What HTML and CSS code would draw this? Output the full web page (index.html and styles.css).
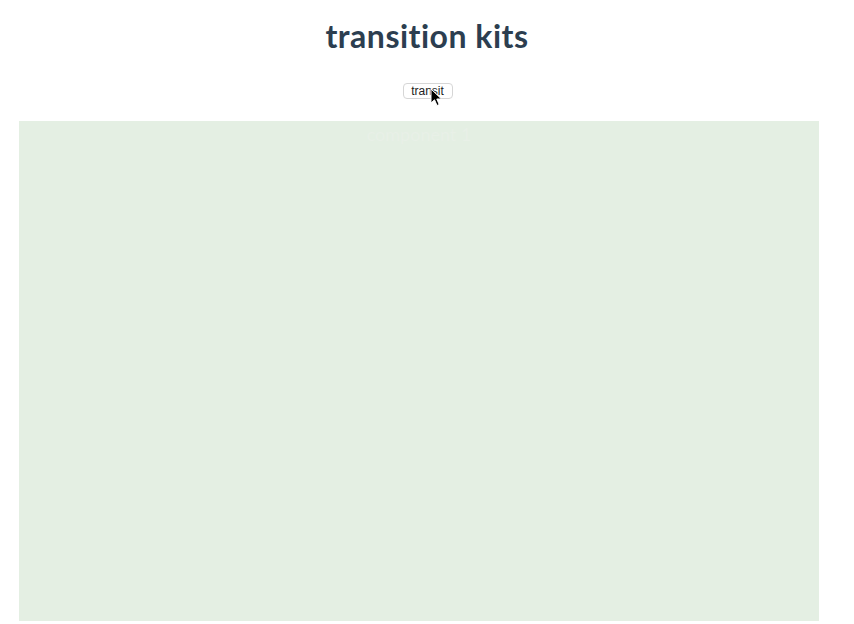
FILE: index.html
```html
<!DOCTYPE html>
<html>
<head>
<meta charset="utf-8">
<link rel="stylesheet" href="styles.css">
</head>
<body>
<div class="app">
  <h1 class="title">transition kits</h1>
  <div class="controls">
    <button class="btn">transit</button>
    <svg class="cursor" width="14" height="20" viewBox="0 0 14 20"><path d="M1 1 L1 15 L4.5 11.8 L7 17.5 L9.2 16.5 L6.8 11 L11.5 11 Z" fill="#000" stroke="#fff" stroke-width="1"/></svg>
  </div>
  <div class="stage">
    <div class="comp">component 1</div>
  </div>
</div>
</body>
</html>
```
FILE: styles.css
```css
html, body { margin: 0; padding: 0; background: #fff; }
body { font-family: Lato, "Noto Sans", sans-serif; color: #2c3e50; }
.app { width: 854px; }
.title {
  margin: 0;
  padding-top: 15px;
  height: 42px;
  font-size: 32px;
  font-weight: 700;
  letter-spacing: 0.5px;
  font-variant-ligatures: none;
  text-align: center;
  line-height: 42px;
  color: #2c3e50;
}
.controls {
  position: relative;
  display: flex;
  justify-content: center;
  margin-top: 26px;
  padding-left: 1px;
  height: 16px;
}
.btn {
  font-family: "Liberation Sans", Arial, sans-serif;
  font-size: 12px;
  color: #222;
  height: 16px;
  width: 50px;
  padding: 0;
  line-height: 14px;
  background: #fff;
  border: 1px solid #d6d6d6;
  border-radius: 4px;
}
.cursor { position: absolute; left: 430px; top: 5px; }
.stage {
  margin-top: 22px;
  margin-left: 19px;
  width: 800px;
  height: 500px;
  background: #e4efe3;
}
.comp {
  text-align: center;
  font-size: 18px;
  padding-top: 2px;
  line-height: 22px;
  color: #e8f0e7;
}
```
